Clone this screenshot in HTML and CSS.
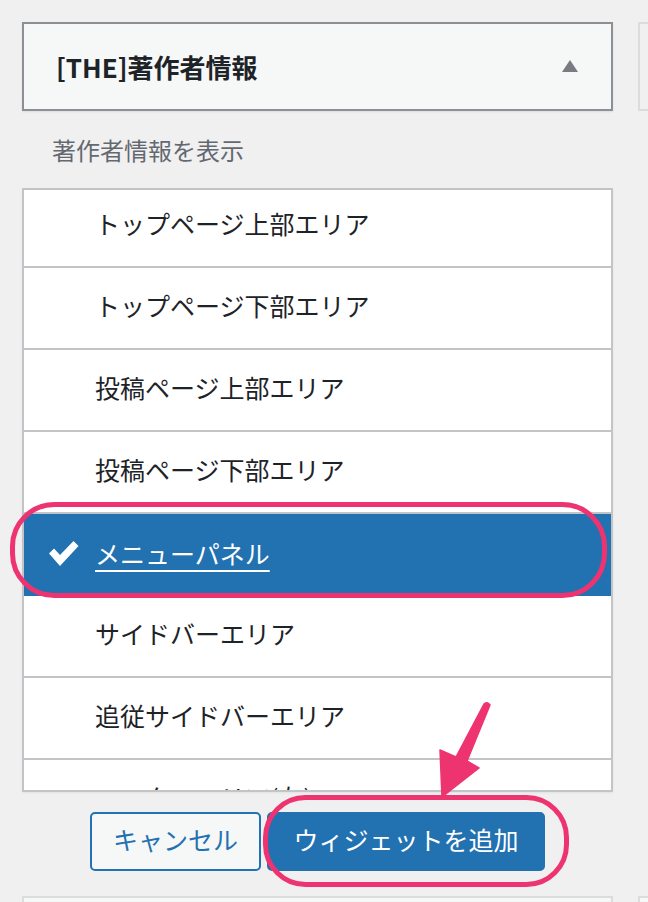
FILE: index.html
```html
<!DOCTYPE html>
<html lang="ja">
<head>
<meta charset="utf-8">
<title>[THE]著作者情報</title>
<link rel="stylesheet" href="styles.css">
</head>
<body>
<div class="page">
  <div class="main">
    <div class="widget-head">
      <h3 class="widget-title">[THE]著作者情報</h3>
      <span class="toggle"></span>
    </div>
    <p class="widget-desc">著作者情報を表示</p>
    <div class="area-list">
      <ul class="area-inner">
        <li class="area"><span class="slot"></span>トップページ上部エリア</li>
        <li class="area"><span class="slot"></span>トップページ下部エリア</li>
        <li class="area"><span class="slot"></span>投稿ページ上部エリア</li>
        <li class="area"><span class="slot"></span>投稿ページ下部エリア</li>
        <li class="area selected"><span class="slot"><svg class="check" width="30" height="26" viewBox="0 0 30 26"><path d="M0 12.5 L5 7.5 L11 14 L24.5 0 L29.5 5 L11 25 Z" fill="#fff"/></svg></span><span class="sel-text">メニューパネル</span></li>
        <li class="area"><span class="slot"></span>サイドバーエリア</li>
        <li class="area"><span class="slot"></span>追従サイドバーエリア</li>
        <li class="area"><span class="slot"></span>フッターエリア(左)</li>
      </ul>
    </div>
    <div class="actions">
      <button class="btn btn-secondary">キャンセル</button>
      <button class="btn btn-primary">ウィジェットを追加</button>
    </div>
    <div class="next-box"></div>
  </div>
  <div class="side">
    <div class="side-box"></div>
    <div class="side-next"></div>
  </div>
  <svg class="overlay" width="648" height="902" viewBox="0 0 648 902">
    <rect x="12.5" y="504.5" width="592" height="91" rx="42" fill="none" stroke="#ee3470" stroke-width="5"/>
    <rect x="265.5" y="797.5" width="301" height="87" rx="40" fill="none" stroke="#ee3470" stroke-width="5"/>
    <path d="M484 704 Q487 701 490 705 L467 761 L479 768 L442 797 L440 750 L456 757 Z" fill="#ee3470" stroke="#ee3470" stroke-width="1.5" stroke-linejoin="round"/>
  </svg>
</div>
</body>
</html>
```
FILE: styles.css
```css
* { box-sizing: border-box; }
html, body {
  margin: 0;
  padding: 0;
  background: #f0f0f1;
  width: 648px;
  height: 902px;
  overflow: hidden;
}
body {
  font-family: "Noto Sans CJK JP", "Noto Sans", sans-serif;
  color: #1d2327;
}
.page {
  position: relative;
  display: flex;
  gap: 25px;
  padding: 22px 0 0 22px;
  height: 902px;
}
.main {
  width: 591px;
  flex: none;
  display: flex;
  flex-direction: column;
}
.main > *, .side > * { flex-shrink: 0; }
.widget-head {
  height: 89px;
  border: 2px solid #8c8f94;
  background: #f6f7f7;
  display: flex;
  align-items: center;
  justify-content: space-between;
  padding: 0 33px 0 32px;
  box-shadow: 0 1px 2px rgba(0,0,0,0.08);
}
.widget-title {
  margin: 0;
  font-size: 26px;
  font-weight: 700;
  line-height: 1;
  color: #1d2327;
}
.toggle {
  width: 0;
  height: 0;
  border-left: 8px solid transparent;
  border-right: 8px solid transparent;
  border-bottom: 12px solid #787c82;
  margin-top: -2px;
}
.widget-desc {
  margin: 21px 0 0 30px;
  height: 56px;
  font-size: 24px;
  line-height: 36px;
  color: #646970;
}
.area-list {
  height: 604px;
  border: 2px solid #c3c4c7;
  background: #fff;
  overflow: hidden;
  box-shadow: 0 1px 2px rgba(0,0,0,0.06);
}
.area-inner {
  list-style: none;
  margin: -4px 0 0 0;
  padding: 0;
}
.area {
  height: 82px;
  border-bottom: 2px solid #c3c4c7;
  display: flex;
  align-items: center;
  padding: 0 0 5px 25px;
  font-size: 25px;
  line-height: 1;
  color: #1d2327;
  white-space: nowrap;
}
.slot {
  width: 46px;
  flex: none;
  display: flex;
  align-items: center;
}
.area.selected {
  background: #2271b1;
  color: #fff;
  border-bottom-color: #2271b1;
  padding-bottom: 2px;
}
.check { display: block; margin-top: 2px; }
.sel-text {
  text-decoration: underline;
  text-underline-offset: 6px;
  text-decoration-thickness: 2px;
}
.actions {
  display: flex;
  justify-content: center;
  gap: 6px;
  margin-top: 20px;
}
.btn {
  height: 59px;
  font-family: "Noto Sans CJK JP", "Noto Sans", sans-serif;
  font-size: 25px;
  line-height: 1;
  border-radius: 5px;
  padding: 0 0 4px;
  white-space: nowrap;
  text-align: center;
  cursor: pointer;
}
.btn-secondary {
  width: 171px;
  background: #f6f7f7;
  color: #2271b1;
  border: 2px solid #2271b1;
}
.btn-primary {
  width: 278px;
  background: #2271b1;
  color: #fff;
  border: 2px solid #2271b1;
}
.next-box {
  margin-top: 25px;
  height: 40px;
  border: 2px solid #dcdcde;
  background: #f6f7f7;
}
.side {
  flex: 1;
  display: flex;
  flex-direction: column;
}
.side-box {
  height: 89px;
  border: 2px solid #dcdcde;
  border-right: none;
  background: #f0f0f1;
}
.side-next {
  margin-top: 785px;
  height: 40px;
  border: 2px solid #dcdcde;
  border-right: none;
  background: #f6f7f7;
}
.overlay {
  position: absolute;
  left: 0;
  top: 0;
  pointer-events: none;
}
```
